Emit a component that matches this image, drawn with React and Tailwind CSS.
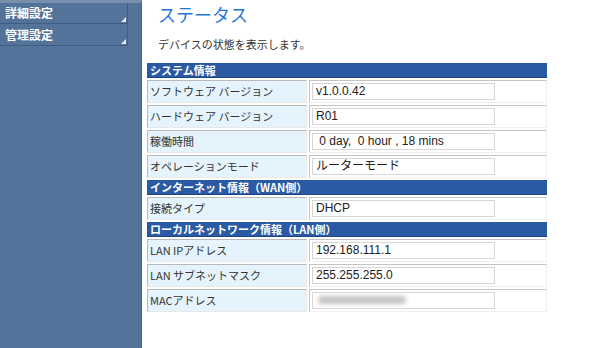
import React from "react";

const jp = { fontFamily: '"Noto Sans CJK JP", "Noto Sans", sans-serif' };
const lat = { fontFamily: '"Liberation Sans", "Noto Sans CJK JP", sans-serif' };

function Header({ children }) {
  return (
    <div
      className="h-[15px] bg-[#2a5aa3] text-white text-[11px] font-bold leading-[15px] pl-[3px] border-b border-[#1d4584]"
      style={jp}
    >
      {children}
    </div>
  );
}

function Row({ label, value, blur }) {
  return (
    <div className="flex gap-[2px] h-[23px]">
      <div
        className="w-[160px] shrink-0 bg-[#e5f4fc] border-t border-l border-[#b9b9b9] border-r border-r-[#e8e8e8] border-b border-b-[#e8e8e8] text-[11px] text-[#333] leading-[21px] pl-[2px]"
        style={jp}
      >
        {label}
      </div>
      <div className="flex-1 border-t border-l border-[#c4c4c4] border-r border-r-[#efefef] border-b border-b-[#efefef] bg-white pl-[2px] pt-[2px]">
        <div
          className="w-[183px] h-[17px] border border-[#d6d6d6] bg-white text-[12px] text-[#222] leading-[15px] pl-[3px]"
          style={lat}
        >
          {blur ? (
            <span className="inline-block mt-[3px] ml-[2px] w-[88px] h-[8px] bg-[#c4c4c4] blur-[2px] rounded-sm" />
          ) : (
            value
          )}
        </div>
      </div>
    </div>
  );
}

function MenuItem({ children }) {
  return (
    <div className="relative h-[21px] w-[128px] border-b border-r border-[#3f5d80] text-white text-[12px] font-bold leading-[19px] pl-[5px]" style={jp}>
      {children}
      <span className="absolute right-[1px] bottom-[1px] w-0 h-0 border-l-[5px] border-l-transparent border-b-[5px] border-b-[#e8eef5]" />
    </div>
  );
}

export default function App() {
  return (
    <div className="flex w-[600px] h-[348px] bg-white overflow-hidden">
      <div className="w-[142px] shrink-0 h-full bg-[#53739a] border-t-[3px] border-t-[#7890ad] border-r border-r-[#46658a] flex flex-col gap-[1px]">
        <MenuItem>詳細設定</MenuItem>
        <MenuItem>管理設定</MenuItem>
      </div>
      <div className="flex-1 pl-[5px] pt-[2px]">
        <div className="pl-[11px] text-[18px] text-[#1f74d8] leading-[24px] h-[27px]" style={jp}>
          ステータス
        </div>
        <div className="pl-[11px] mt-[8px] text-[11px] text-[#333] leading-[14px]" style={jp}>
          デバイスの状態を表示します。
        </div>
        <div className="mt-[12px] w-[400px] flex flex-col gap-[2px]">
          <Header>システム情報</Header>
          <Row label="ソフトウェア バージョン" value="v1.0.0.42" />
          <Row label="ハードウェア バージョン" value="R01" />
          <Row label="稼働時間" value={"\u00a00 day,\u00a0 0 hour , 18 mins"} />
          <Row label="オペレーションモード" value="ルーターモード" />
          <Header>インターネット情報（WAN側）</Header>
          <Row label="接続タイプ" value="DHCP" />
          <Header>ローカルネットワーク情報（LAN側）</Header>
          <Row label="LAN IPアドレス" value="192.168.111.1" />
          <Row label="LAN サブネットマスク" value="255.255.255.0" />
          <Row label="MACアドレス" blur />
        </div>
      </div>
    </div>
  );
}
